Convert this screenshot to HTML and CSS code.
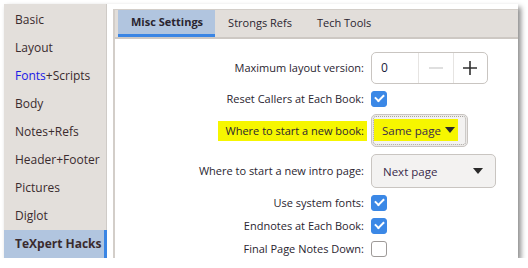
FILE: index.html
```html
<!DOCTYPE html>
<html lang="en">
<head>
  <meta charset="UTF-8" />
  <title>TeXpert Hacks</title>
  <link rel="stylesheet" href="styles.css">
</head>
<body>
  <div class="window">
    <!-- Left navigation -->
    <nav class="sidebar">
      <div class="nav-item">Basic</div>
      <div class="nav-item">Layout</div>
      <div class="nav-item"><span class="blue">Fonts</span>+Scripts</div>
      <div class="nav-item">Body</div>
      <div class="nav-item">Notes+Refs</div>
      <div class="nav-item">Header+Footer</div>
      <div class="nav-item">Pictures</div>
      <div class="nav-item">Diglot</div>
      <div class="nav-item active">TeXpert Hacks</div>
    </nav>

    <!-- Tabbed panel -->
    <section class="panel">
      <div class="tabs">
        <div class="tab active">Misc Settings</div>
        <div class="tab">Strongs Refs</div>
        <div class="tab">Tech Tools</div>
      </div>

      <div class="form">
        <label class="label">Maximum layout version:</label>
        <div class="spin">
          <span class="spin-value">0</span>
          <span class="spin-btn minus">
            <svg width="16" height="16" viewBox="0 0 16 16"><path d="M1 8h14" stroke="#d8d8d8" stroke-width="1.6"/></svg>
          </span>
          <span class="spin-btn plus">
            <svg width="16" height="16" viewBox="0 0 16 16"><path d="M1 8h14M8 1v14" stroke="#303030" stroke-width="1.6"/></svg>
          </span>
        </div>

        <label class="label">Reset Callers at Each Book:</label>
        <span class="check on"></span>

        <label class="label marked">Where to start a new book:</label>
        <div class="combo focused">
          <div class="combo-inner">
            <span class="combo-fill">
              <span class="combo-text">Same page</span>
              <span class="arrow"></span>
            </span>
          </div>
        </div>

        <label class="label">Where to start a new intro page:</label>
        <div class="combo wide">
          <span class="combo-text">Next page</span>
          <span class="arrow"></span>
        </div>

        <label class="label">Use system fonts:</label>
        <span class="check on"></span>

        <label class="label">Endnotes at Each Book:</label>
        <span class="check on"></span>

        <label class="label">Final Page Notes Down:</label>
        <span class="check"></span>
      </div>
    </section>
  </div>
</body>
</html>
```

FILE: styles.css
```css
body {
  margin: 0;
  background: #ffffff;
  font-family: "Open Sans", "Noto Sans", sans-serif;
  font-size: 12px;
  color: #2a2530;
}

.window {
  margin: 4px 0 0 4px;
  width: 514px;
  height: 254px;
  display: flex;
  background: #ffffff;
  overflow: hidden;
  box-shadow: 3px 3px 5px rgba(0, 0, 0, 0.45);
}

/* Sidebar */
.sidebar {
  width: 102px;
  flex-shrink: 0;
  padding-top: 2px;
  background: #e3dfdb;
  border-right: 1px solid #cfcbc7;
}

.nav-item {
  height: 28px;
  line-height: 28px;
  padding-left: 11px;
  color: #3a2b2e;
  white-space: nowrap;
}

.nav-item .blue {
  color: #1a1ae6;
}

.nav-item.active {
  background: #b1c5df;
  font-weight: bold;
  box-shadow: inset -3px 0 0 #3a85e4;
  margin-right: -1px;
}

/* Panel */
.panel {
  flex: 1;
  margin: 5px 0 0 6px;
  border-left: 2px solid #d3cec9;
  border-top: 1px solid #d3cec9;
  background: #ffffff;
  font-size: 11px;
}

.tabs {
  display: flex;
  height: 27px;
  padding-left: 3px;
  background: #e2deda;
  border-bottom: 2px solid #cdc8c3;
}

.tab {
  padding: 0 12px 0 13px;
  line-height: 25px;
  color: #2a2530;
}

.tab.active {
  background: #b1c5df;
  font-weight: bold;
  border-bottom: 3px solid #3a85e4;
  line-height: 24px;
}

/* Form */
.form {
  display: grid;
  grid-template-columns: 252px auto;
  column-gap: 4px;
  row-gap: 7px;
  align-items: center;
  justify-items: start;
  padding-top: 13px;
}

.label {
  justify-self: end;
  padding-right: 3px;
  line-height: 16px;
  white-space: nowrap;
}

.label.marked {
  background: #f6f600;
  padding-left: 8px;
  line-height: 20px;
}

.spin {
  display: flex;
  width: 115px;
  height: 30px;
  border: 1px solid #c9c5c1;
  border-radius: 5px;
  font-size: 12px;
}

.spin-value {
  width: 38px;
  padding-left: 9px;
  line-height: 30px;
  color: #1a1a3a;
  border-right: 1px solid #e6e4e2;
}

.spin-btn {
  display: flex;
  align-items: center;
  justify-content: center;
  width: 34px;
}

.spin-btn.minus {
  border-right: 1px solid #e6e4e2;
}

.check {
  width: 14px;
  height: 14px;
  border: 1px solid #9e9a98;
  border-radius: 3px;
  background: #ffffff;
  position: relative;
}

.check.on {
  background: #3b88e6;
  border-color: #3b88e6;
}

.check.on::after {
  content: '';
  position: absolute;
  left: 3px;
  top: 2px;
  width: 7px;
  height: 4px;
  border-left: 2px solid #ffffff;
  border-bottom: 2px solid #ffffff;
  transform: rotate(-45deg);
}

.combo {
  display: flex;
  align-items: center;
  box-sizing: border-box;
  height: 34px;
  border: 1px solid #c9c5c1;
  border-radius: 5px;
  background: #f3f2f1;
  font-size: 11.5px;
}

.combo.focused {
  width: 97px;
  height: 33px;
  padding: 1px;
  box-shadow: inset 0 0 0 1px #ebe9e7;
}

.combo.wide {
  width: 125px;
  padding: 0 12px 0 11px;
  justify-content: space-between;
}

.combo-inner {
  display: flex;
  align-items: center;
  box-sizing: border-box;
  width: 100%;
  height: 100%;
  padding: 0 7px 1px 0;
  border: 1px dotted #a8a4a0;
  border-radius: 3px;
}

.combo-fill {
  display: flex;
  align-items: center;
  justify-content: space-between;
  width: 84px;
  height: 22px;
  box-sizing: border-box;
  padding: 0 3px 0 8px;
  background: #f6f600;
}

.combo-text {
  color: #3a2a4a;
}

.arrow {
  width: 0;
  height: 0;
  border-left: 5px solid transparent;
  border-right: 5px solid transparent;
  border-top: 6px solid #2a2a2a;
}
```
